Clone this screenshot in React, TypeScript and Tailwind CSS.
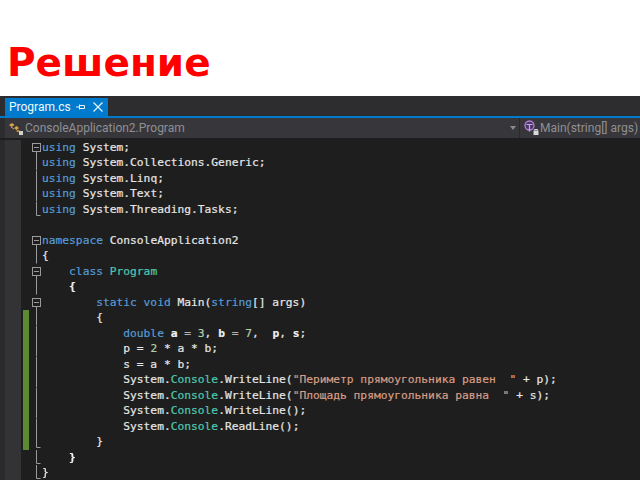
const kw = "text-[#569cd6]";
const ty = "text-[#4ec9b0]";
const st = "text-[#d69d85]";
const nu = "text-[#b5cea8]";
const op = "text-[#b4b4b4]";
const va = "font-bold text-[#f0f0f0]";

type Seg = [string, string?];
type Row = { fold?: "open" | "line" | "end"; changed?: boolean; code: Seg[] };

const rows: Row[] = [
  { fold: "open", code: [["using", kw], [" System;"]] },
  { fold: "line", code: [["using", kw], [" System.Collections.Generic;"]] },
  { fold: "line", code: [["using", kw], [" System.Linq;"]] },
  { fold: "line", code: [["using", kw], [" System.Text;"]] },
  { fold: "end", code: [["using", kw], [" System.Threading.Tasks;"]] },
  { code: [] },
  { fold: "open", code: [["namespace", kw], [" ConsoleApplication2"]] },
  { fold: "line", code: [["{"]] },
  { fold: "open", code: [["    "], ["class", kw], [" "], ["Program", ty]] },
  { fold: "line", code: [["    "], ["{", va]] },
  { fold: "open", code: [["        "], ["static void", kw], [" Main("], ["string", kw], ["[] args)"]] },
  { fold: "line", changed: true, code: [["        {"]] },
  { fold: "line", changed: true, code: [["            "], ["double", kw], [" "], ["a", va], [" "], ["=", op], [" "], ["3", nu], [", "], ["b", va], [" "], ["=", op], [" "], ["7", nu], [",  "], ["p", va], [", "], ["s", va], [";"]] },
  { fold: "line", changed: true, code: [["            p = "], ["2", nu], [" * a * b;"]] },
  { fold: "line", changed: true, code: [["            s = a * b;"]] },
  { fold: "line", changed: true, code: [["            System."], ["Console", ty], [".WriteLine("], ["\"Периметр прямоугольника равен  \"", st], [" + p);"]] },
  { fold: "line", changed: true, code: [["            System."], ["Console", ty], [".WriteLine("], ["\"Площадь прямоугольника равна  \"", st], [" + s);"]] },
  { fold: "line", changed: true, code: [["            System."], ["Console", ty], [".WriteLine();"]] },
  { fold: "line", changed: true, code: [["            System."], ["Console", ty], [".ReadLine();"]] },
  { fold: "end", changed: true, code: [["        }"]] },
  { fold: "end", code: [["    "], ["}", va]] },
  { fold: "end", code: [["}"]] },
];

function Fold({ kind }: { kind?: Row["fold"] }) {
  if (!kind) return <div className="w-[11px] shrink-0" />;
  return (
    <svg width="11" height="15.5" viewBox="0 0 11 15.5" className="shrink-0" fill="none" stroke="#9a9a9a">
      {kind === "open" && (
        <>
          <rect x="1.5" y="3.5" width="8" height="8" fill="#1e1e1e" />
          <path d="M3 7.5h5" />
          <path d="M5.5 11.5v4" />
        </>
      )}
      {kind === "line" && <path d="M5.5 0v15.5" />}
      {kind === "end" && <path d="M5.5 0v13.5h4" />}
    </svg>
  );
}

function ClassIcon() {
  return (
    <svg width="16" height="16" viewBox="0 0 16 16" className="shrink-0">
      <path d="M1 5l3-2 2.5 2-3 2z" fill="#d8a24a" />
      <path d="M6 8l2.5-2 2.5 2-2.5 2z" fill="#d8a24a" />
      <path d="M3 7l3 2" stroke="#d8a24a" strokeWidth="1" />
      <path d="M8 11l2-1.5 2 1.5-2 1.5z" fill="#b98a3e" />
      <rect x="11" y="11" width="4" height="4" fill="#d0d0d0" />
    </svg>
  );
}

function MethodIcon() {
  return (
    <svg width="16" height="16" viewBox="0 0 16 16" className="shrink-0" fill="none">
      <circle cx="6.5" cy="5.5" r="4.5" fill="#4a3566" stroke="#b180d7" strokeWidth="1.3" />
      <path d="M3.5 4.5h6M6.5 4.5v7" stroke="#c9a6e4" strokeWidth="1.2" />
      <rect x="10.5" y="10.5" width="5" height="4.5" fill="#d8d8d8" />
      <path d="M11.5 10.5v-1h3v1" stroke="#d8d8d8" strokeWidth="1" />
    </svg>
  );
}

export default function App() {
  return (
    <div className="w-[640px] h-[480px] overflow-hidden bg-white flex flex-col">
      <h1 className="h-[96px] pl-[7px] pt-[39px] text-[39px] leading-[48px] font-bold text-[#ff0000] font-['DejaVu_Sans',sans-serif]">
        Решение
      </h1>

      <div className="flex-1 min-h-0 flex flex-col bg-[#1e1e1e] font-['Roboto',sans-serif] blur-[0.3px]">
        {/* Tab strip */}
        <div className="h-[20px] shrink-0 bg-[#2d2d30] pl-[5px] pt-[2px]">
          <div className="w-[103px] h-[18px] bg-[#007acc] flex items-center pl-[4px] text-[#f2f8fd] text-[12px]">
            <span className="w-[67px] shrink-0 whitespace-nowrap">Program.cs</span>
            <svg width="10" height="10" viewBox="0 0 10 10" fill="none" stroke="#e8f3fb" className="shrink-0">
              <path d="M0 5h3M3.5 2.5v5M3.5 3.5h5v3h-5M4 6.5h4" />
            </svg>
            <svg width="10" height="10" viewBox="0 0 10 10" fill="none" stroke="#e8f3fb" strokeWidth="1.2" className="ml-[7px] shrink-0">
              <path d="M0.5 0.5l9 9M9.5 0.5l-9 9" />
            </svg>
          </div>
        </div>
        <div className="h-[2px] shrink-0 bg-[#007acc]" />

        {/* Navigation bar */}
        <div className="h-[20px] shrink-0 bg-[#2d2d30] pl-[5px]">
          <div className="h-full bg-[#37373b] flex items-center text-[#8f8f92] text-[12px]">
            <div className="w-[514px] shrink-0 flex items-center pl-[3px]">
              <ClassIcon />
              <span className="ml-[1px] whitespace-nowrap">ConsoleApplication2.Program</span>
              <div className="ml-auto mr-[3px] w-0 h-0 border-x-[3px] border-x-transparent border-t-[4px] border-t-[#8a8a8a]" />
            </div>
            <div className="w-px h-full shrink-0 bg-[#2a2a2c]" />
            <div className="flex items-center pl-[3px]">
              <MethodIcon />
              <span className="ml-[1px] whitespace-nowrap">Main(string[] args)</span>
            </div>
          </div>
        </div>

        {/* Code */}
        <div className="flex-1 min-h-0 pt-[1.5px] flex flex-col font-['DejaVu_Sans_Mono',monospace] text-[11.25px] text-[#e6e6e6] [-webkit-text-stroke:0.2px]">
          {rows.map((row, i) => (
            <div key={i} className="h-[15.5px] shrink-0 flex leading-[15.5px]">
              <div className="w-[5px] shrink-0 bg-[#2a2a2d]" />
              <div className="w-[16px] shrink-0 bg-[#333336]" />
              <div className={`w-[6px] shrink-0 ml-[2px] mr-[2px] ${row.changed ? "bg-[#5b8a32]" : ""}`} />
              <Fold kind={row.fold} />
              <div className="whitespace-pre">
                {row.code.map((seg, j) => (
                  <span key={j} className={seg[1]}>
                    {seg[0]}
                  </span>
                ))}
              </div>
            </div>
          ))}
        </div>
      </div>
    </div>
  );
}
